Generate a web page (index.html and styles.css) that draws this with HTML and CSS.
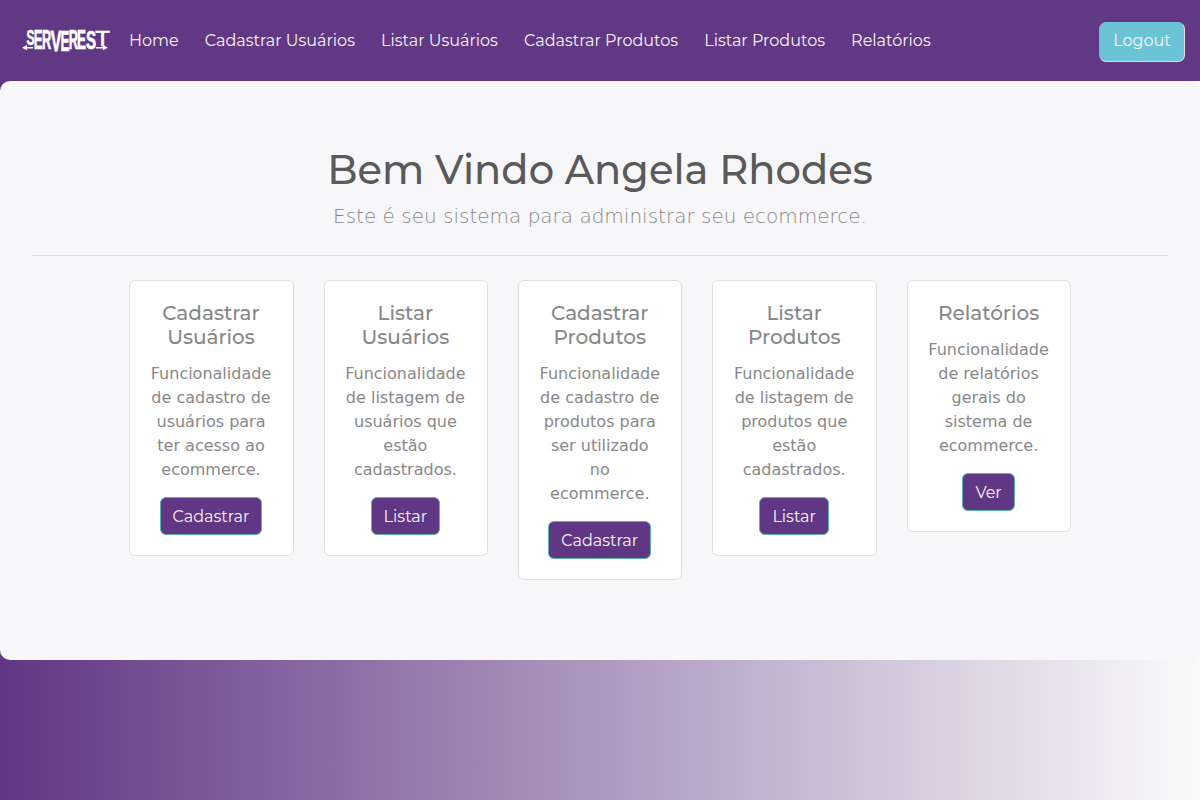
FILE: index.html
```html
<!DOCTYPE html>
<html lang="pt-BR">
<head>
<meta charset="utf-8">
<title>ServeRest</title>
<link rel="stylesheet" href="styles.css">
</head>
<body>
<nav class="navbar">
  <svg class="logo" width="92" height="26" viewBox="20 27 92 26" fill="#fff" stroke="#fff" aria-label="Serverest">
    <g class="logo-letters">
      <text transform="translate(26.4 44.6) scale(.6 1.06)">S</text>
      <text transform="translate(33.8 49) scale(.66 1.36)">E</text>
      <text transform="translate(41.9 49) scale(.64 1.36)">R</text>
      <text transform="translate(50.7 51) scale(.8 1.5)">V</text>
      <text transform="translate(60.5 51) scale(.67 1.5)">E</text>
      <text transform="translate(68.8 49) scale(.64 1.36)">R</text>
      <text transform="translate(77.1 49) scale(.67 1.36)">E</text>
      <text transform="translate(86 49) scale(.76 1.33)">S</text>
      <text class="thin" transform="translate(95.2 46) scale(1.2 1.13)">T</text>
    </g>
    <path d="M25 47.7H33M96 47.7H105" stroke-width="1.4"/>
    <path d="M22 47.7l5-2.6v5.2zM108 47.7l-5-2.6v5.2z" stroke="none"/>
  </svg>
  <div class="links">
    <a>Home</a>
    <a>Cadastrar Usuários</a>
    <a>Listar Usuários</a>
    <a>Cadastrar Produtos</a>
    <a>Listar Produtos</a>
    <a>Relatórios</a>
  </div>
  <button class="logout">Logout</button>
</nav>
<main class="jumbotron">
  <h1>Bem Vindo Angela Rhodes</h1>
  <p class="lead">Este é seu sistema para administrar seu ecommerce.</p>
  <hr>
  <div class="cards">
    <section class="card"><h5>Cadastrar Usuários</h5><p>Funcionalidade de cadastro de usuários para ter acesso ao ecommerce.</p><a class="btn">Cadastrar</a></section>
    <section class="card"><h5>Listar Usuários</h5><p>Funcionalidade de listagem de usuários que estão cadastrados.</p><a class="btn">Listar</a></section>
    <section class="card"><h5>Cadastrar Produtos</h5><p>Funcionalidade de cadastro de produtos para ser utilizado no ecommerce.</p><a class="btn">Cadastrar</a></section>
    <section class="card"><h5>Listar Produtos</h5><p>Funcionalidade de listagem de produtos que estão cadastrados.</p><a class="btn">Listar</a></section>
    <section class="card"><h5>Relatórios</h5><p>Funcionalidade de relatórios gerais do sistema de ecommerce.</p><a class="btn">Ver</a></section>
  </div>
</main>
</body>
</html>
```
FILE: styles.css
```css
* { box-sizing: border-box; }
html { min-height: 100%; }
body {
  margin: 0;
  min-height: 800px;
  background: linear-gradient(to right, #603784, #fafafa);
  font: 16px/24px "DejaVu Sans", sans-serif;
  color: #888;
}
.navbar {
  display: flex;
  align-items: center;
  height: 81px;
  padding: 0 15px 0 20px;
  background: #613884;
}
.logo { flex: none; overflow: visible; margin-top: -1px; }
.logo-letters { font: bold 20px "Liberation Sans", sans-serif; stroke-width: .5; }
.logo-letters .thin { font-weight: normal; }
.links { display: flex; gap: 26.1px; margin-left: 17px; flex: 1; }
.links a, .logout, .btn {
  font-family: Montserrat, Inter, sans-serif;
  font-size: 16px;
  font-weight: 400;
  white-space: nowrap;
  color: #f6f3f8;
}
.logout {
  width: 86px;
  height: 40px;
  margin-top: 2px;
  padding: 0 0 3px;
  background: #6bc3d6;
  border: 1px solid #a6a3b8;
  border-top-color: #6bc3d6;
  border-right-color: #e3dfd8;
  border-bottom-color: #e3dfd8;
  border-radius: 7px;
}
.jumbotron {
  height: 579px;
  padding: 64px 32px;
  background: #f7f7f9;
  border-radius: 10px;
  text-align: center;
}
h1, h5 { margin: 0; font-family: Montserrat, Inter, sans-serif; font-weight: 500; }
h1 { margin-bottom: 6px; font-size: 40px; line-height: 50px; color: #5a5a5a; }
.lead { margin: 0; font-size: 20px; line-height: 30px; font-weight: 200; }
hr { margin: 24px 0; border: 0; border-top: 1px solid #dcdce0; }
.cards {
  display: grid;
  grid-template-columns: repeat(5, 1fr);
  gap: 30px;
  width: 942.4px;
  padding-left: .4px;
  margin: 0 auto;
  align-items: start;
}
.card { padding: 20px 20.4px 20px 19.6px; background: #fff; border: 1px solid #dfdfdf; border-radius: 6px; }
h5 { margin-bottom: 12px; font-size: 20px; line-height: 24px; }
.card p { margin: 13px 0 15px; }
.btn {
  display: inline-block;
  height: 38px;
  padding: 7px 12px 5px;
  vertical-align: top;
  background: #603784;
  border: 1px solid #5fb0b0;
  border-radius: 6px;
}
```
